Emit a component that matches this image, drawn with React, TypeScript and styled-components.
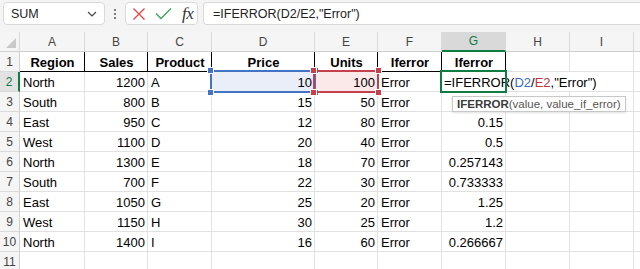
import React from 'react';
import styled, { createGlobalStyle, css } from 'styled-components';

const GlobalStyle = createGlobalStyle`
  html, body { margin: 0; padding: 0; background: #ffffff; overflow: hidden; }
  body { font-family: "Liberation Sans", Arial, sans-serif; }
`;

const GREEN = '#107c41';
const GRID = '#e1e1e1';
const BLUE = '#4472c4';
const RED = '#c5404a';

const Page = styled.div`
  width: 640px;
  height: 269px;
  overflow: hidden;
  background: #fff;
`;

/* ---------- toolbar ---------- */
const Toolbar = styled.div`
  height: 32px;
  box-sizing: border-box;
  display: flex;
  align-items: flex-start;
  padding: 2px 0 0 3px;
  background: #f4f4f4;
`;

const Box = styled.div`
  height: 23px;
  box-sizing: border-box;
  background: #fff;
  border: 1px solid #d9d9d9;
  border-radius: 4px;
  display: flex;
  align-items: center;
`;

const NameBox = styled(Box)`
  width: 102px;
  padding: 0 7px 0 7px;
  justify-content: space-between;
  font-size: 12.5px;
  color: #222;
`;

const Dots = styled.div`
  width: 20px;
  height: 23px;
  display: flex;
  flex-direction: column;
  align-items: center;
  justify-content: center;
  gap: 2px;
  span {
    width: 2px;
    height: 2px;
    background: #555;
    border-radius: 1px;
  }
`;

const FxBox = styled(Box)`
  width: 73px;
  padding: 0 0 0 6px;
  gap: 9px;
`;

const FxText = styled.span`
  font-family: "Liberation Serif", "Times New Roman", serif;
  font-style: italic;
  font-size: 17px;
  color: #333;
  letter-spacing: -0.5px;
  margin-left: 1px;
`;

const FormulaBox = styled(Box)`
  flex: 1;
  margin-left: 5px;
  border-right: none;
  border-radius: 4px 0 0 4px;
  padding-left: 9px;
  font-size: 12.5px;
  color: #222;
`;

/* ---------- grid ---------- */
const Sheet = styled.div`
  display: grid;
  grid-template-columns: 20px 65px 63px 64px 103px 63px 64px 64px 64px 64px 12px;
  grid-auto-rows: 20px;
  font-size: 13px;
  color: #000;
`;

const ColHead = styled.div<{ $sel?: boolean }>`
  box-sizing: border-box;
  background: #f5f5f5;
  border-right: 1px solid #dadada;
  border-bottom: 1px solid #cfcfcf;
  display: flex;
  align-items: center;
  justify-content: center;
  font-size: 12px;
  color: #444;
  ${(p) =>
    p.$sel &&
    css`
      background: #d9d9d9;
      color: ${GREEN};
      border-bottom: 2px solid ${GREEN};
    `}
`;

const Corner = styled(ColHead)`
  position: relative;
  justify-content: flex-end;
  align-items: flex-end;
  padding: 0 3px 3px 0;
`;

const RowHead = styled.div<{ $sel?: boolean }>`
  box-sizing: border-box;
  background: #f5f5f5;
  border-right: 1px solid #cfcfcf;
  border-bottom: 1px solid #dadada;
  display: flex;
  align-items: center;
  justify-content: center;
  font-size: 12px;
  color: #444;
  padding-top: 1px;
  ${(p) =>
    p.$sel &&
    css`
      background: #e2e2e2;
      color: ${GREEN};
      border-right: 2px solid ${GREEN};
    `}
`;

const Cell = styled.div<{ $align?: 'left' | 'right' | 'center'; $head?: boolean; $fill?: string }>`
  box-sizing: border-box;
  position: relative;
  border-right: 1px solid ${GRID};
  border-bottom: 1px solid ${GRID};
  padding: 2px 2px 0 3px;
  line-height: 17px;
  white-space: nowrap;
  text-align: ${(p) => p.$align || 'left'};
  background: ${(p) => p.$fill || 'transparent'};
  ${(p) =>
    p.$head &&
    css`
      font-weight: bold;
      border-right: 1px solid #000;
      border-bottom: 1px solid #000;
    `}
`;

const RangeBox = styled.div<{ $color: string }>`
  position: absolute;
  left: -2px;
  top: -2px;
  right: -2px;
  bottom: -2px;
  border: 2px solid ${(p) => p.$color};
  pointer-events: none;
  z-index: 2;
`;

const Handle = styled.i<{ $color: string; $x: 'l' | 'r'; $y: 't' | 'b' }>`
  position: absolute;
  width: 5px;
  height: 5px;
  background: ${(p) => p.$color};
  border: 1px solid #fff;
  ${(p) => (p.$x === 'l' ? 'left: -5px;' : 'right: -5px;')}
  ${(p) => (p.$y === 't' ? 'top: -5px;' : 'bottom: -5px;')}
`;

const Editor = styled.div`
  position: absolute;
  left: 0;
  top: 0;
  bottom: 0;
  padding: 2px 6px 0 2px;
  background: #fff;
  white-space: nowrap;
  line-height: 17px;
  z-index: 3;
`;

const ActiveBorder = styled.div`
  position: absolute;
  left: -2px;
  top: -2px;
  right: -2px;
  bottom: -2px;
  border: 2px solid ${GREEN};
  z-index: 4;
  pointer-events: none;
`;

const Ref = styled.span<{ $color: string }>`
  color: ${(p) => p.$color};
`;

const Tooltip = styled.div`
  position: absolute;
  left: 10px;
  top: 4px;
  height: 16px;
  box-sizing: border-box;
  padding: 0 4px;
  background: #fff;
  border: 1px solid #c8c8c8;
  box-shadow: 0 1px 2px rgba(0, 0, 0, 0.12);
  font-size: 11.5px;
  line-height: 14px;
  color: #555;
  white-space: nowrap;
  z-index: 5;
  b {
    color: #3a3a3a;
  }
`;

const Corners = ({ color }: { color: string }) => (
  <>
    <Handle $color={color} $x="l" $y="t" />
    <Handle $color={color} $x="r" $y="t" />
    <Handle $color={color} $x="l" $y="b" />
    <Handle $color={color} $x="r" $y="b" />
  </>
);

const LETTERS = ['A', 'B', 'C', 'D', 'E', 'F', 'G', 'H', 'I', ''];
const HEAD = ['Region', 'Sales', 'Product', 'Price', 'Units', 'Iferror', 'Iferror'];

type Row = [string, number, string, number, number, string, string];
const DATA: Row[] = [
  ['North', 1200, 'A', 10, 100, 'Error', ''],
  ['South', 800, 'B', 15, 50, 'Error', ''],
  ['East', 950, 'C', 12, 80, 'Error', '0.15'],
  ['West', 1100, 'D', 20, 40, 'Error', '0.5'],
  ['North', 1300, 'E', 18, 70, 'Error', '0.257143'],
  ['South', 700, 'F', 22, 30, 'Error', '0.733333'],
  ['East', 1050, 'G', 25, 20, 'Error', '1.25'],
  ['West', 1150, 'H', 30, 25, 'Error', '1.2'],
  ['North', 1400, 'I', 16, 60, 'Error', '0.266667'],
];

const Blank = () => (
  <>
    <Cell />
    <Cell />
    <Cell />
  </>
);

export default function App() {
  return (
    <Page>
      <GlobalStyle />
      <Toolbar>
        <NameBox>
          <span>SUM</span>
          <svg width="10" height="6" viewBox="0 0 10 6">
            <path d="M1 1 L5 5 L9 1" fill="none" stroke="#444" strokeWidth="1.2" />
          </svg>
        </NameBox>
        <Dots>
          <span />
          <span />
          <span />
        </Dots>
        <FxBox>
          <svg width="14" height="14" viewBox="0 0 14 14">
            <path d="M1.5 1.5 L12.5 12.5 M12.5 1.5 L1.5 12.5" stroke="#e0464e" strokeWidth="1.4" />
          </svg>
          <svg width="17" height="13" viewBox="0 0 17 13">
            <path d="M1 6.5 L6 11.5 L16 1.5" fill="none" stroke="#3fa45b" strokeWidth="1.4" />
          </svg>
          <FxText>fx</FxText>
        </FxBox>
        <FormulaBox>=IFERROR(D2/E2,"Error")</FormulaBox>
      </Toolbar>

      <Sheet>
        <Corner>
          <svg width="10" height="10" viewBox="0 0 10 10">
            <path d="M10 0 L10 10 L0 10 Z" fill="#c9c9c9" />
          </svg>
        </Corner>
        {LETTERS.map((l, i) => (
          <ColHead key={i} $sel={l === 'G'}>
            {l}
          </ColHead>
        ))}

        <RowHead>1</RowHead>
        {HEAD.map((h, i) => (
          <Cell key={i} $head $align="center">
            {h}
          </Cell>
        ))}
        <Blank />

        {DATA.map((r, i) => {
          const n = i + 2;
          const first = n === 2;
          return (
            <React.Fragment key={n}>
              <RowHead $sel={first}>{n}</RowHead>
              <Cell>{r[0]}</Cell>
              <Cell $align="right">{r[1]}</Cell>
              <Cell>{r[2]}</Cell>
              <Cell $align="right" $fill={first ? '#e9eef8' : undefined}>
                {r[3]}
                {first && (
                  <RangeBox $color={BLUE}>
                    <Corners color={BLUE} />
                  </RangeBox>
                )}
              </Cell>
              <Cell $align="right" $fill={first ? '#fbe8e9' : undefined}>
                {r[4]}
                {first && (
                  <RangeBox $color={RED}>
                    <Corners color={RED} />
                  </RangeBox>
                )}
              </Cell>
              <Cell>{r[5]}</Cell>
              <Cell $align="right">
                {first && (
                  <>
                    <Editor>
                      =IFERROR(<Ref $color="#3b6cc4">D2</Ref>/<Ref $color="#c3353d">E2</Ref>,"Error")
                    </Editor>
                    <ActiveBorder />
                  </>
                )}
                {n === 3 && (
                  <Tooltip>
                    <b>IFERROR</b>(value, value_if_error)
                  </Tooltip>
                )}
                {r[6]}
              </Cell>
              <Blank />
            </React.Fragment>
          );
        })}

        <RowHead>11</RowHead>
        {LETTERS.map((_, i) => (
          <Cell key={i} />
        ))}
      </Sheet>
    </Page>
  );
}
